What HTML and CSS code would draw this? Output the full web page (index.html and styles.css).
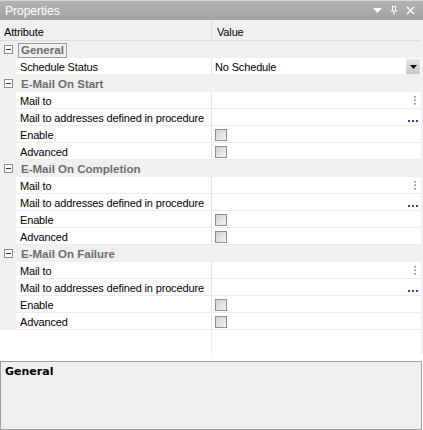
FILE: index.html
```
<!doctype html>
<html>
<head>
<meta charset="utf-8">
<title>Properties</title>
<link rel="stylesheet" href="styles.css">
</head>
<body>
<div class="panel">
	<div class="titlebar">
		<span class="title">Properties</span>
		<span class="tools">
			<svg width="9" height="6" viewBox="0 0 9 6"><path d="M0 0h9L4.5 5z" fill="#fff"/></svg>
			<svg width="8" height="9" viewBox="0 0 8 9"><path d="M2 0.5h4M2.5 0.5v4.5M5.5 0.5v4.5M0.5 5h7M4 5v4" stroke="#fff" fill="none"/></svg>
			<svg width="9" height="9" viewBox="0 0 9 9"><path d="M1 1l7 7M8 1l-7 7" stroke="#fff" stroke-width="1.4"/></svg>
		</span>
	</div>
	<div class="grid">
		<div class="head">
			<div class="hname">Attribute</div>
			<div class="hval">Value</div>
		</div>

		<div class="row cat">
			<div class="gut"><span class="exp"></span></div>
			<div class="cname focus">General</div>
		</div>
		<div class="row">
			<div class="gut"></div>
			<div class="name">Schedule Status</div>
			<div class="val">No Schedule<span class="drop"><svg width="7" height="4" viewBox="0 0 7 4"><path d="M0 0h7L3.5 4z" fill="#000"/></svg></span></div>
		</div>

		<div class="row cat">
			<div class="gut"><span class="exp"></span></div>
			<div class="cname">E-Mail On Start</div>
		</div>
		<div class="row">
			<div class="gut"></div>
			<div class="name">Mail to</div>
			<div class="val"><span class="vdots"></span></div>
		</div>
		<div class="row">
			<div class="gut"></div>
			<div class="name">Mail to addresses defined in procedure</div>
			<div class="val"><span class="hdots"></span></div>
		</div>
		<div class="row">
			<div class="gut"></div>
			<div class="name">Enable</div>
			<div class="val"><span class="check"></span></div>
		</div>
		<div class="row">
			<div class="gut"></div>
			<div class="name">Advanced</div>
			<div class="val"><span class="check"></span></div>
		</div>

		<div class="row cat">
			<div class="gut"><span class="exp"></span></div>
			<div class="cname">E-Mail On Completion</div>
		</div>
		<div class="row">
			<div class="gut"></div>
			<div class="name">Mail to</div>
			<div class="val"><span class="vdots"></span></div>
		</div>
		<div class="row">
			<div class="gut"></div>
			<div class="name">Mail to addresses defined in procedure</div>
			<div class="val"><span class="hdots"></span></div>
		</div>
		<div class="row">
			<div class="gut"></div>
			<div class="name">Enable</div>
			<div class="val"><span class="check"></span></div>
		</div>
		<div class="row">
			<div class="gut"></div>
			<div class="name">Advanced</div>
			<div class="val"><span class="check"></span></div>
		</div>

		<div class="row cat">
			<div class="gut"><span class="exp"></span></div>
			<div class="cname">E-Mail On Failure</div>
		</div>
		<div class="row">
			<div class="gut"></div>
			<div class="name">Mail to</div>
			<div class="val"><span class="vdots"></span></div>
		</div>
		<div class="row">
			<div class="gut"></div>
			<div class="name">Mail to addresses defined in procedure</div>
			<div class="val"><span class="hdots"></span></div>
		</div>
		<div class="row">
			<div class="gut"></div>
			<div class="name">Enable</div>
			<div class="val"><span class="check"></span></div>
		</div>
		<div class="row">
			<div class="gut"></div>
			<div class="name">Advanced</div>
			<div class="val"><span class="check"></span></div>
		</div>

		<div class="filler"><div class="fname"></div></div>
	</div>
	<div class="desc">
		<b>General</b>
	</div>
</div>
</body>
</html>
```
FILE: styles.css
```
body {
	margin: 0;
	background: #fff;
	font-family: "Liberation Sans", Arial, sans-serif;
	font-size: 11px;
	letter-spacing: -0.15px;
	color: #000;
}

.panel {
	width: 423px;
	height: 430px;
	display: flex;
	flex-direction: column;
	overflow: hidden;
}

.titlebar {
	height: 20px;
	display: flex;
	align-items: center;
	justify-content: space-between;
	background: linear-gradient(#b4b4b4, #a2a2a2);
	border-top: 1px solid #d8d8d8;
	box-sizing: border-box;
	padding: 0 8px 0 5px;
	color: #fff;
	font-size: 12px;
	letter-spacing: 0;
}
.tools {
	display: flex;
	align-items: center;
	gap: 8px;
}

.grid {
	display: flex;
	flex-direction: column;
	border-right: 2px solid #f0f0f0;
}

.head {
	display: grid;
	grid-template-columns: 212px 1fr;
	height: 21px;
	background: #f0f0f0;
	border-bottom: 1px solid #dedede;
	box-sizing: border-box;
}
.hname {
	padding: 6px 0 0 4px;
	border-right: 1px solid #dcdcdc;
}
.hval {
	padding: 6px 0 0 5px;
}

.row {
	display: grid;
	grid-template-columns: 16px 196px 1fr;
	height: 17px;
}
.gut {
	background: #f0f0f0;
	position: relative;
}
.name {
	padding: 3px 0 0 4px;
	border-bottom: 1px solid #ececec;
	border-right: 1px solid #e4e4e4;
	white-space: nowrap;
	overflow: hidden;
}
.val {
	position: relative;
	padding: 3px 0 0 3px;
	border-bottom: 1px solid #ececec;
}

.cat {
	background: #f0f0f0;
}
.cname {
	grid-column: 2 / 4;
	align-self: center;
	justify-self: start;
	margin: 1px 0 0 2px;
	padding: 0 2px 1px 2px;
	font-size: 11.5px;
	letter-spacing: 0;
	font-weight: bold;
	color: #6d6d6d;
	border: 1px solid transparent;
}
.cname.focus {
	border-color: #9a9a9a;
}

.exp {
	position: absolute;
	left: 4px;
	top: 4px;
	width: 7px;
	height: 7px;
	border: 1px solid #8c8c8c;
	background: #fff;
}
.exp:after {
	content: "";
	position: absolute;
	left: 1px;
	top: 3px;
	width: 5px;
	height: 1px;
	background: #333;
}

.drop {
	position: absolute;
	right: 1px;
	top: 1px;
	width: 14px;
	height: 15px;
	display: flex;
	align-items: center;
	justify-content: center;
	background: linear-gradient(#e6e6e6, #c8c8c8);
}
.vdots {
	position: absolute;
	right: 5px;
	top: 3px;
	width: 2px;
	height: 10px;
	background: radial-gradient(circle, #a0a0a0 0.8px, transparent 1.2px) 0 0 / 2px 3.5px;
}
.hdots {
	position: absolute;
	right: 2px;
	bottom: 3px;
	width: 12px;
	height: 2px;
	background: radial-gradient(circle, #3a3aa8 0.8px, transparent 1.2px) 0 0 / 4px 2px;
}
.check {
	display: block;
	width: 10px;
	height: 10px;
	border: 1px solid #8f8f8f;
	background: linear-gradient(135deg, #d0d0d0, #f4f4f4);
}

.filler {
	height: 24px;
	display: grid;
	grid-template-columns: 212px;
}
.fname {
	border-right: 1px solid #ececec;
}

.desc {
	flex: 1;
	margin-top: 7px;
	border: 1px solid #a0a0a0;
	background: #efefef;
	margin-right: 1px;
	padding: 3px 4px;
	font-family: "DejaVu Sans", sans-serif;
	font-size: 11px;
	letter-spacing: 0;
}
```
